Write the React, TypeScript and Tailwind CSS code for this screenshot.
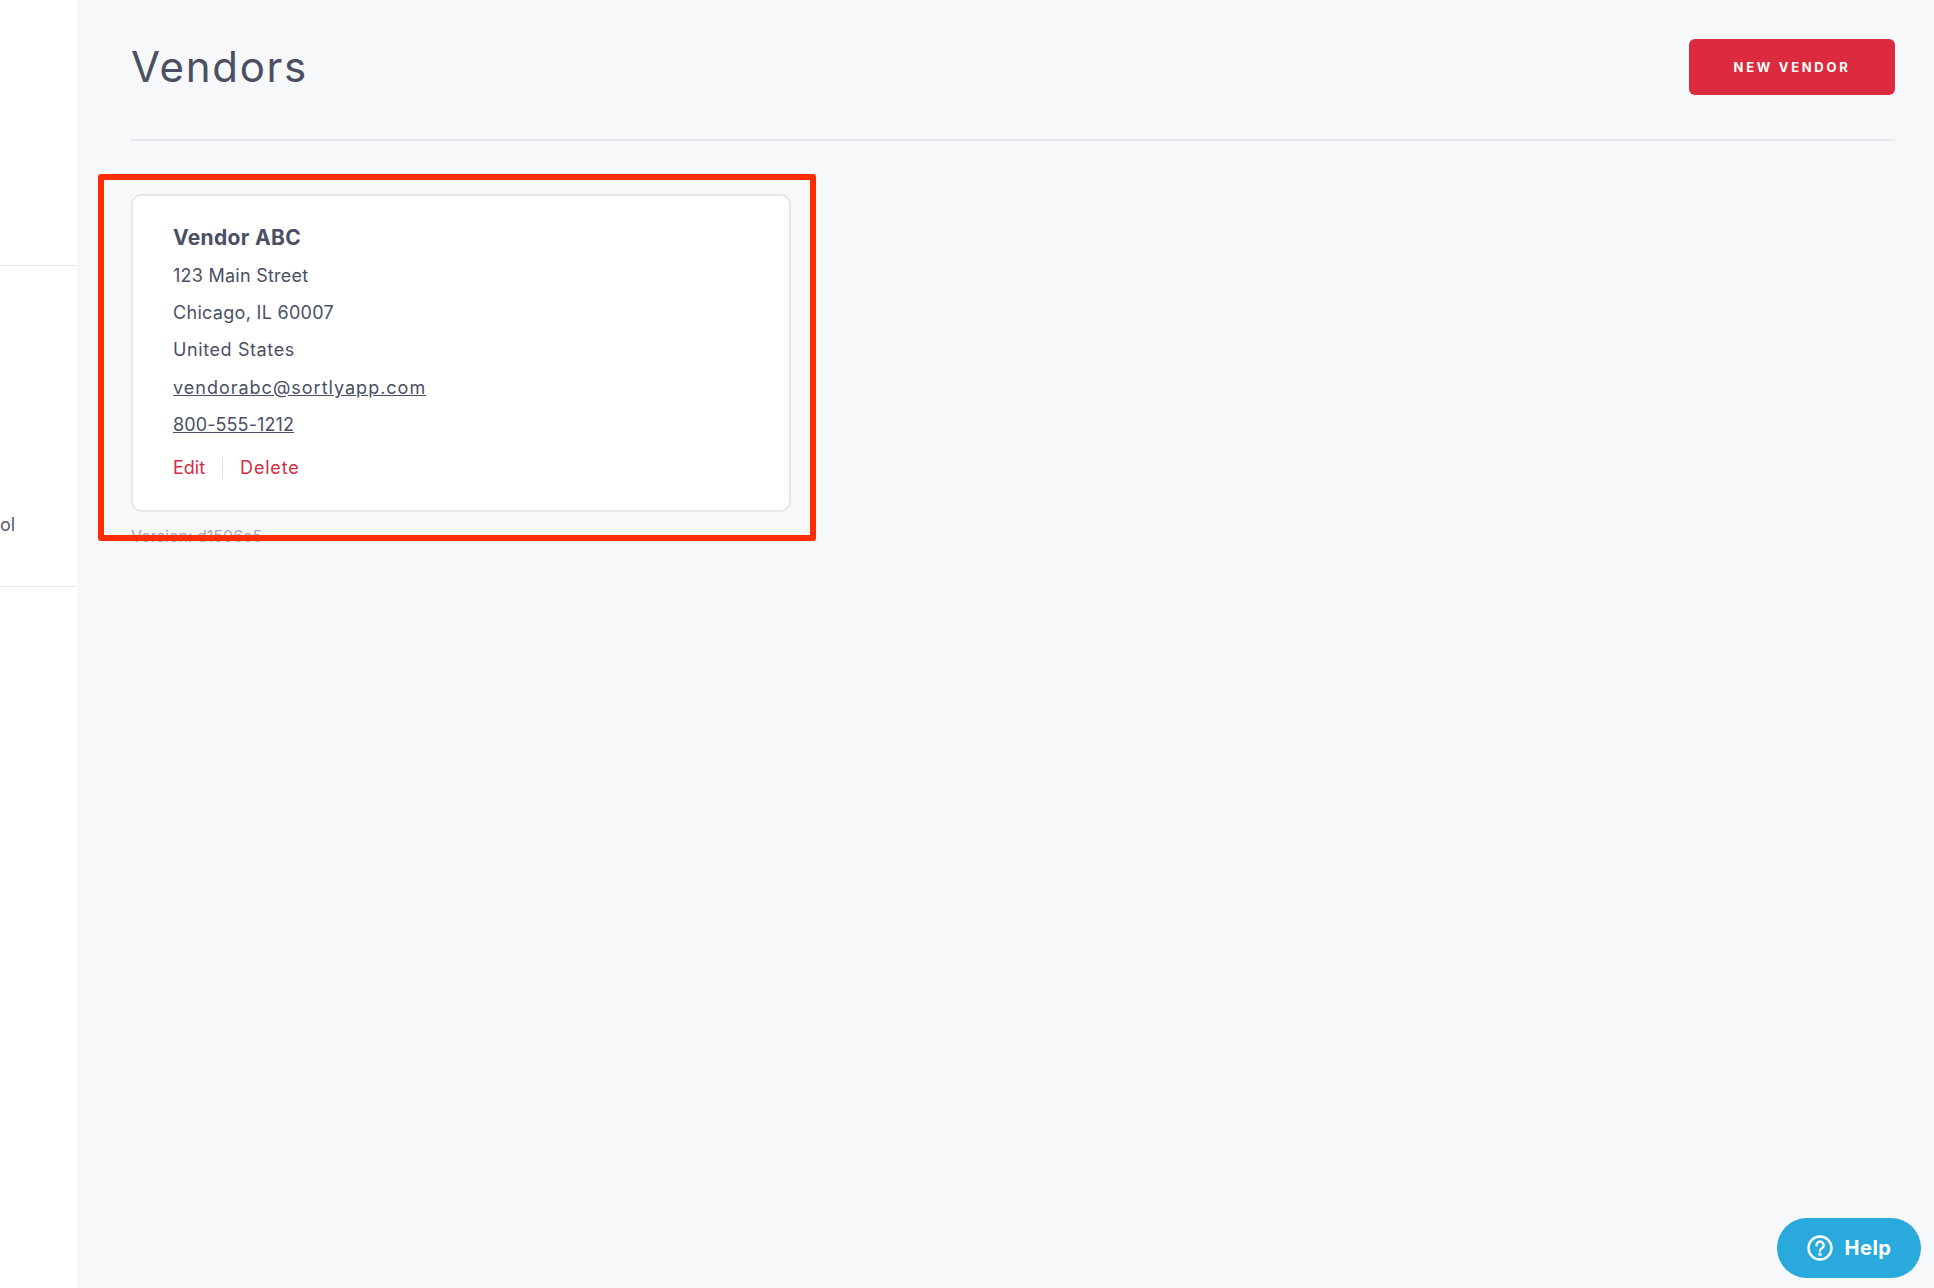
export default function App() {
  return (
    <div className="relative flex h-[1288px] w-full overflow-hidden bg-[#f6f8fa] font-['Inter',sans-serif] text-[#4a4f63]">
      <aside className="flex w-[77px] shrink-0 flex-col bg-white">
        <div className="h-[266px] shrink-0 border-b border-[#e9ebef]" />
        <div className="flex h-[321px] shrink-0 items-start border-b border-[#e9ebef] pt-[248px] text-[18px] leading-[22px] text-[#55596a]">
          ol
        </div>
      </aside>
      <main className="flex-1 pl-[54px] pr-[39px]">
        <header className="flex items-center justify-between border-b-2 border-[#e4e7ec] pb-[44px] pt-[39px]">
          <h1 className="text-[42px] font-normal leading-[56px] tracking-[1.7px] text-[#4a4f63]">Vendors</h1>
          <button className="flex h-[56px] w-[206px] items-center justify-center rounded-md bg-[#dc2b3e] pt-[2px] text-[13px] font-bold tracking-[2.7px] text-white">
            NEW VENDOR
          </button>
        </header>
        <section className="mt-[53px] h-[318px] w-[660px] rounded-[10px] border-2 border-[#e4e7ec] bg-white pl-[40px] pt-[23px]">
          <h2 className="mb-px text-[21px] font-bold leading-[37px] tracking-[.35px] text-[#4a4f63]">Vendor ABC</h2>
          <p className="text-[18px] leading-[37px] tracking-[.25px]">123 Main Street</p>
          <p className="text-[18px] leading-[37px] tracking-[.3px]">Chicago, IL 60007</p>
          <p className="text-[18px] leading-[37px] tracking-[.6px]">United States</p>
          <p className="mt-px text-[18px] leading-[37px] tracking-[1px]"><a className="underline">vendorabc@sortlyapp.com</a></p>
          <p className="text-[18px] leading-[37px] tracking-[.1px]"><a className="underline">800-555-1212</a></p>
          <div className="mt-[6px] flex items-center text-[18px] leading-[37px] text-[#d62c43]">
            <a>Edit</a>
            <span className="mx-[17px] h-[22px] w-px bg-[#dfe2e8]" />
            <a className="tracking-[.8px]">Delete</a>
          </div>
        </section>
        <p className="mt-[14px] text-[16px] leading-[20px] text-[#a4a9b3]">Version: d1506e5</p>
      </main>
      <div className="pointer-events-none absolute left-[98px] top-[174px] h-[367px] w-[718px] rounded-[3px] border-[6px] border-[#ff2d00]" />
      <button className="absolute left-[1777px] top-[1218px] flex h-[60px] w-[144px] items-center justify-center gap-[12px] rounded-full bg-[#2aa9dc] text-[20px] font-bold tracking-[.5px] text-white">
        <svg width="26" height="26" viewBox="0 0 26 26" fill="none" stroke="currentColor" strokeWidth="2.4" strokeLinecap="round">
          <circle cx="13" cy="13" r="11.5" />
          <path d="M9.5 10.2a3.6 3.6 0 1 1 5.6 3c-1.3.9-2.1 1.4-2.1 2.6" />
          <circle cx="13" cy="19.2" r="0.6" />
        </svg>
        Help
      </button>
    </div>
  );
}
